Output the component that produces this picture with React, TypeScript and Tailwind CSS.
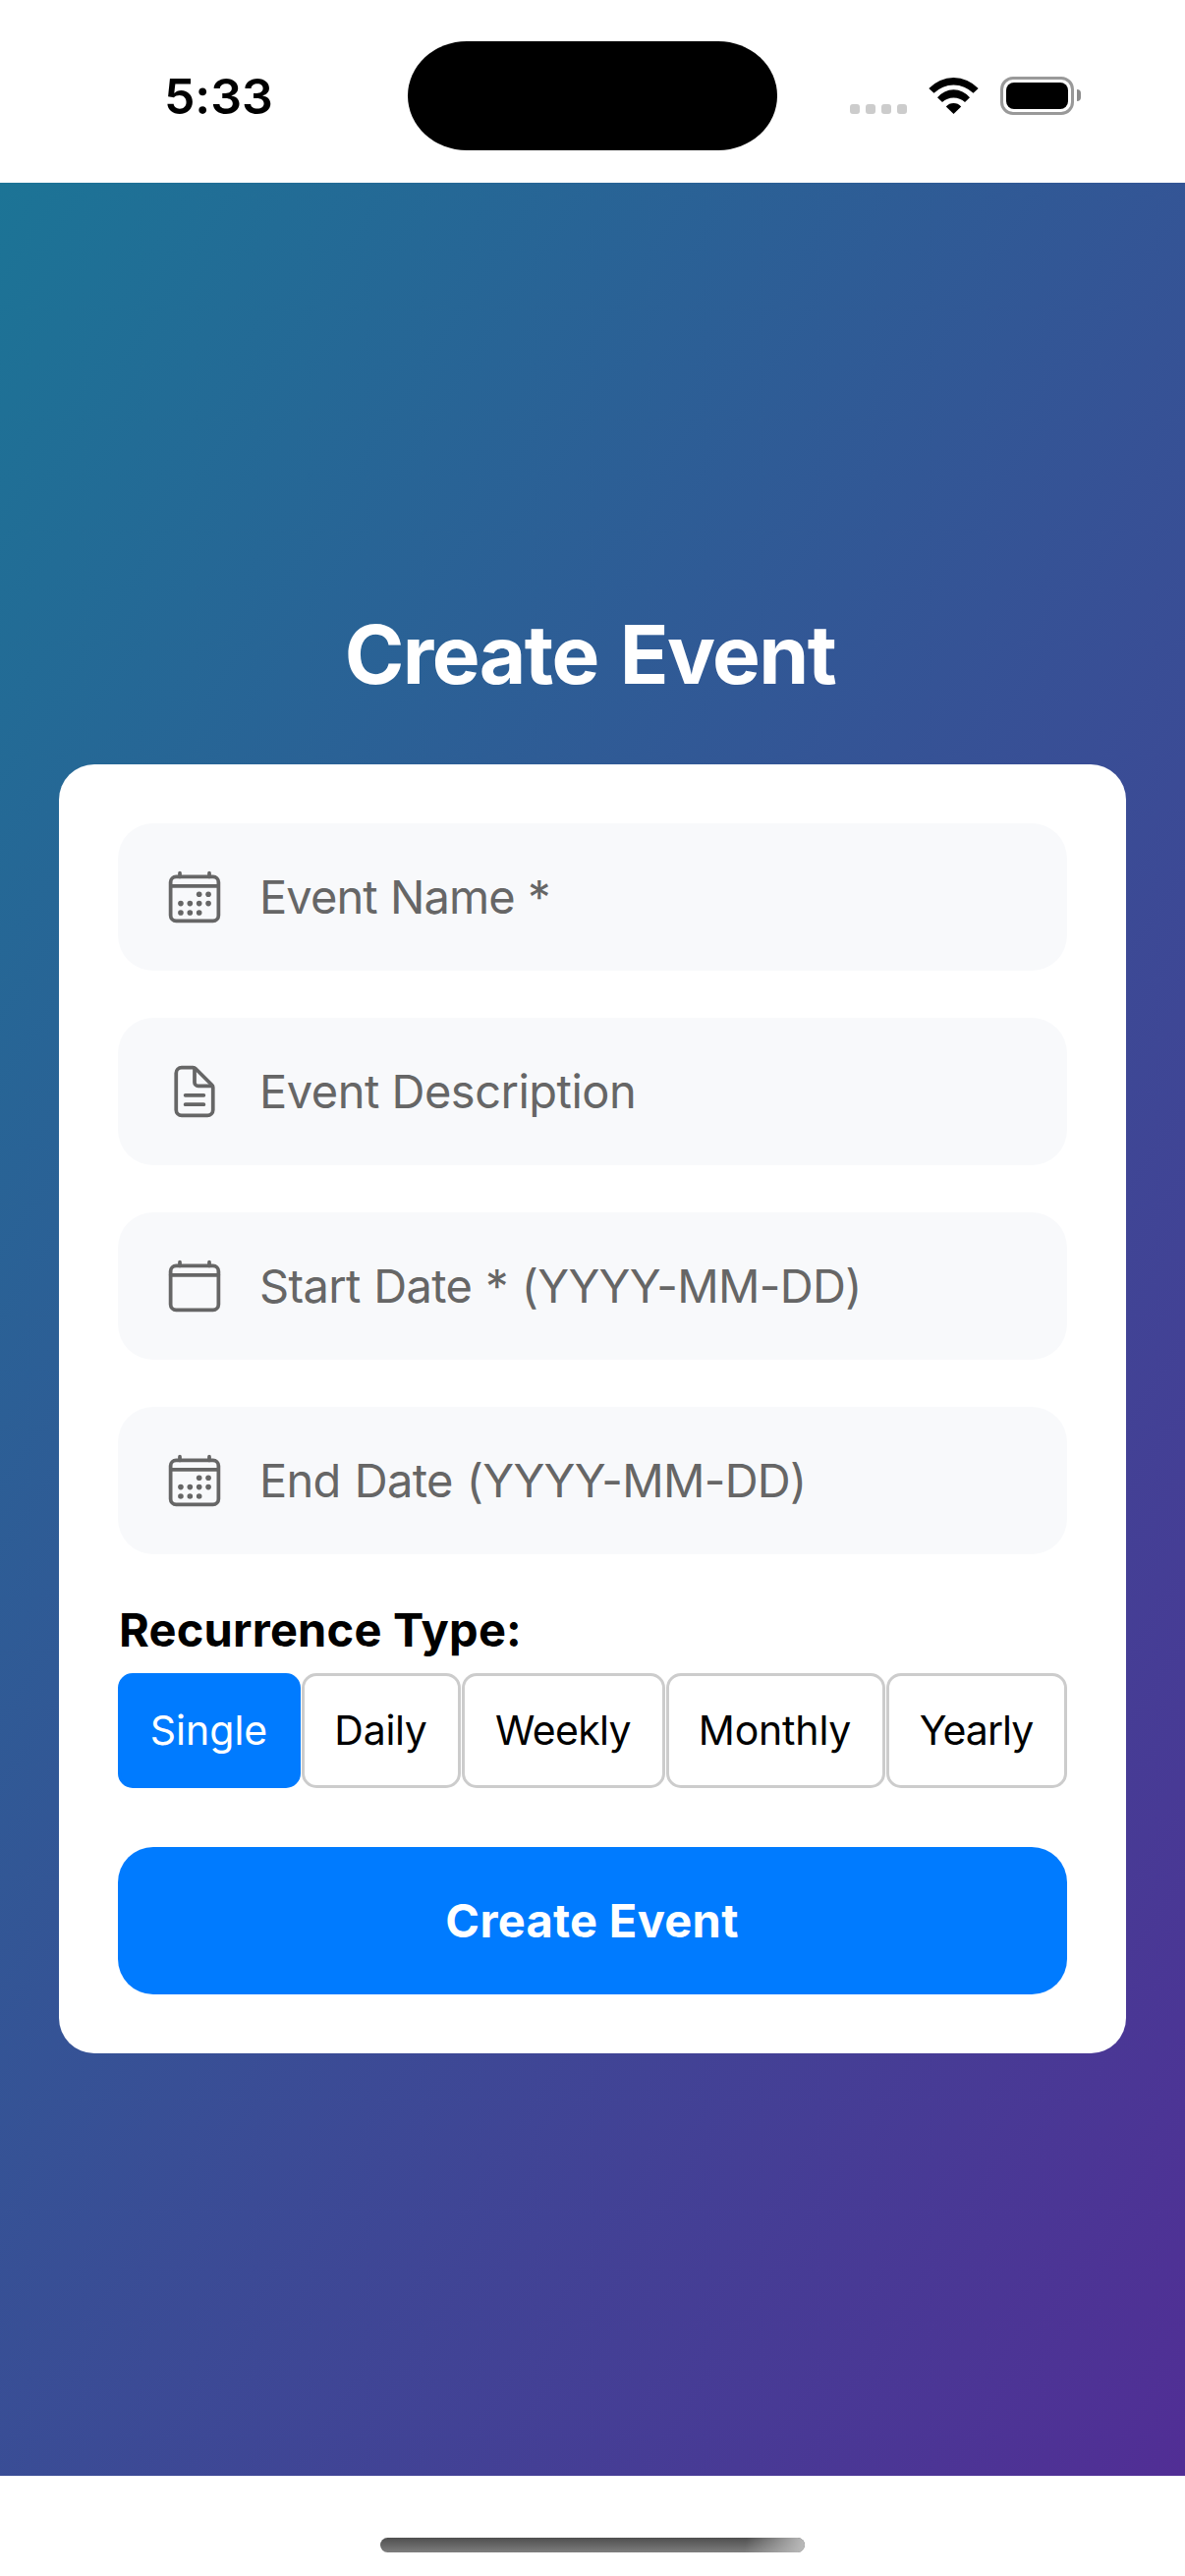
import { IoCalendarClearOutline, IoCalendarOutline, IoDocumentTextOutline } from "react-icons/io5";
import type { IconType } from "react-icons";

type Field = { label: string; icon: IconType; tracking: string };

const fields: Field[] = [
  { label: "Event Name *", icon: IoCalendarOutline, tracking: "tracking-[-0.92px] [word-spacing:1px]" },
  { label: "Event Description", icon: IoDocumentTextOutline, tracking: "tracking-[-0.5px]" },
  { label: "Start Date * (YYYY-MM-DD)", icon: IoCalendarClearOutline, tracking: "tracking-[-0.67px] [word-spacing:1.2px]" },
  { label: "End Date (YYYY-MM-DD)", icon: IoCalendarOutline, tracking: "tracking-[-0.7px] [word-spacing:1.6px]" },
];

const recurrence = [
  { label: "Single", box: "w-[186px] bg-[#007bff] border-[#007bff] text-white", text: "tracking-[0px] pr-[1px]" },
  { label: "Daily", box: "w-[162px] border-[#cccccc]", text: "tracking-[-0.29px] pr-[1px]" },
  { label: "Weekly", box: "w-[207px] border-[#cccccc]", text: "tracking-[-0.63px] pr-[1px]" },
  { label: "Monthly", box: "w-[223px] border-[#cccccc]", text: "tracking-[-0.19px] pr-[2px]" },
  { label: "Yearly", box: "w-[184px] border-[#cccccc]", text: "tracking-[-0.94px] pr-[1px]" },
];

function StatusBar() {
  return (
    <header className="flex h-[186px] items-center bg-white pt-[8px] pl-[167px]">
      <span className="w-[248px] pt-[2px] text-[50px] leading-[60px] font-semibold tracking-[-0.1px] text-black">5:33</span>
      <div className="h-[111px] w-[376px] rounded-[60px/55.5px] bg-black" />
      <div className="mt-[28px] ml-[74px] flex gap-[6px]">
        {[0, 1, 2, 3].map((i) => (
          <span key={i} className="size-[10px] rounded-[3px] bg-[#cccccc]" />
        ))}
      </div>
      <svg className="ml-[22px] h-[37px] w-[51px]" viewBox="0 0 51 37" fill="black" aria-hidden="true">
        <path d="M.3 11A34.4 34.4 0 0 1 50.7 11L45.5 15.8A28.3 28.3 0 0 0 5.5 15.8Z" />
        <path d="M9 20.2A21.3 21.3 0 0 1 42 20.2L37 24.9A16.9 16.9 0 0 0 14 24.9Z" />
        <path d="M17.8 29.4A10.5 10.5 0 0 1 33.2 29.4L25.5 37Z" />
      </svg>
      <div className="ml-[22px] h-[39px] w-[75px] rounded-[13px] border-3 border-[#999999] p-[3px]">
        <div className="h-full rounded-[8px] bg-black" />
      </div>
      <div className="ml-[3px] h-[12px] w-[4px] rounded-r-full bg-[#8c8c8c]" />
    </header>
  );
}

function InputField({ label, icon: Icon, tracking }: Field) {
  return (
    <label className="flex h-[150px] items-center rounded-[36px] bg-[#f8f9fb] pl-[48px] text-[#666666]">
      <Icon className="size-[60px]" />
      <span className={`ml-[36px] text-[47px] leading-[60px] whitespace-nowrap ${tracking}`}>{label}</span>
    </label>
  );
}

export default function App() {
  return (
    <div className="flex h-[2622px] w-[1206px] flex-col overflow-hidden bg-white font-[Inter,sans-serif]">
      <StatusBar />
      <main className="flex h-[2334px] flex-col bg-[linear-gradient(123deg,#1c7496,#512e95)] px-[60px] pt-[431px]">
        <h1 className="pr-[5px] text-center text-[82px] leading-[100px] font-bold tracking-[-1.55px] text-white [word-spacing:4px]">
          Create Event
        </h1>
        <section className="mt-[61px] h-[1312px] rounded-[36px] bg-white p-[60px] text-black">
          <div className="flex flex-col gap-[48px]">
            {fields.map((f) => (
              <InputField key={f.label} {...f} />
            ))}
          </div>
          <p className="mt-[48px] pl-[1px] text-[47px] leading-[58px] font-bold tracking-[0.2px]">Recurrence Type:</p>
          <div className="mt-[15px] flex justify-between">
            {recurrence.map((r) => (
              <button
                key={r.label}
                className={`flex h-[117px] items-center justify-center rounded-[15px] border-3 pb-[1px] ${r.box}`}
              >
                <span className={`text-[41px] leading-[50px] ${r.text}`}>{r.label}</span>
              </button>
            ))}
          </div>
          <button className="mt-[60px] flex h-[150px] w-full items-center justify-center rounded-[36px] bg-[#007bff] pr-[1px] text-[47px] leading-[58px] font-bold tracking-[0.3px] text-white">
            Create Event
          </button>
        </section>
      </main>
      <footer className="flex h-[102px] justify-center pt-[63px]">
        <div className="h-[15px] w-[432px] overflow-hidden rounded-full bg-linear-to-b from-[#4f4f4f] to-[#7e7e7e]">
          <div className="ml-auto h-full w-[70px] bg-[linear-gradient(100deg,transparent_15%,#b8b8b8_95%)]" />
        </div>
      </footer>
    </div>
  );
}
